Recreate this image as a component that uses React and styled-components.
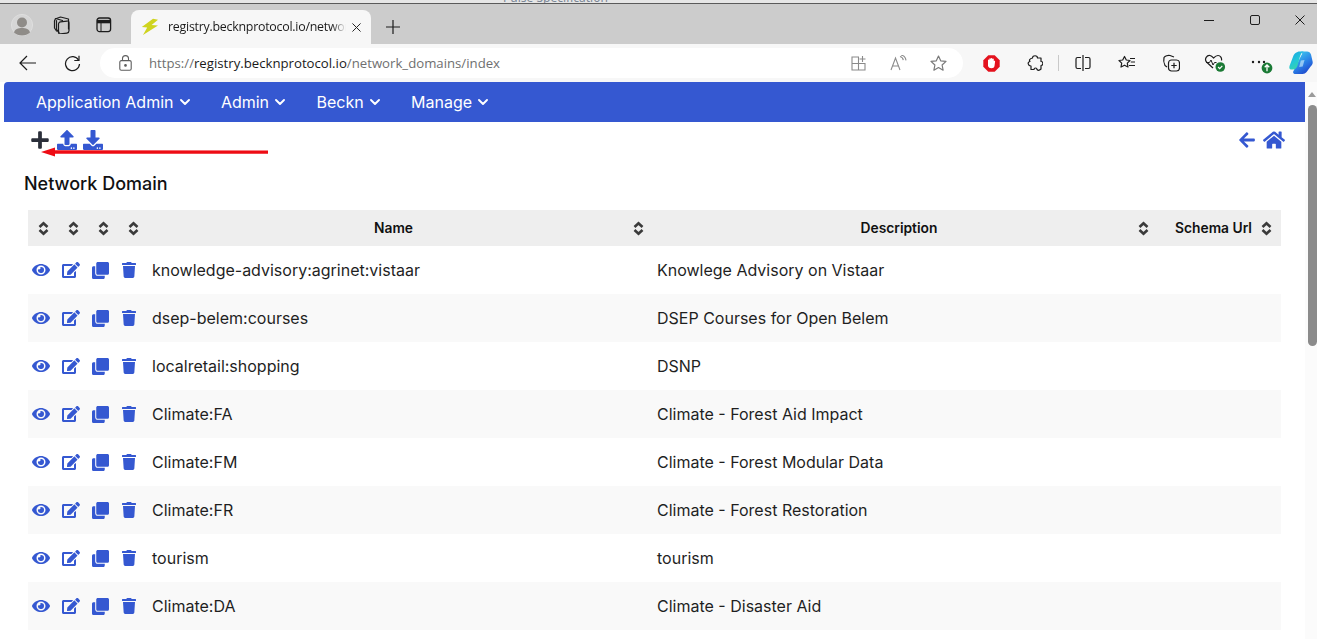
import React from "react";
import styled, { createGlobalStyle } from "styled-components";
import { FaPlus, FaUpload, FaDownload, FaEye, FaEdit, FaClone, FaTrash, FaArrowLeft, FaHome } from "react-icons/fa";

const Global = createGlobalStyle`
  html, body { margin: 0; padding: 0; height: 639px; overflow: hidden; background: #fff; }
  #root { height: 639px; }
  * { box-sizing: border-box; }
`;

const Shell = styled.div`
  width: 1317px; height: 639px; overflow: hidden; display: flex; flex-direction: column;
  font-family: Inter, "Liberation Sans", sans-serif;
`;
const TopStrip = styled.div`
  height: 4px; flex: none; background: #e6e6e6; border-bottom: 1px solid #5a5a5a;
  display: flex; overflow: hidden; padding-left: 503px; color: #7c8796;
  font: 12px/1 "Noto Sans", sans-serif;
`;
const Clipped = styled.span`
  display: block; margin-top: -8px; white-space: nowrap;
`;
const TabBar = styled.div`
  height: 40px; flex: none; background: #cccccc; display: flex; align-items: flex-end;
`;
const Slot = styled.div`
  width: ${p => p.$w || 44}px; height: ${p => p.$h || 40}px; flex: none;
  display: flex; align-items: center; justify-content: center; color: #1c1c1c;
`;
const Tab = styled.div`
  width: 240px; height: 34px; margin-left: 3px; flex: none; background: #f7f7f7; border-radius: 8px 8px 0 0;
  display: flex; align-items: center; padding-left: 10px; position: relative;
`;
const TabTitle = styled.div`
  margin-left: 9px; width: 178px; overflow: hidden; white-space: nowrap; color: #1b1b1b;
  font: 12.4px/18px "Open Sans", sans-serif; letter-spacing: -0.25px;
  -webkit-mask-image: linear-gradient(to right, #000 92%, transparent 100%);
  mask-image: linear-gradient(to right, #000 92%, transparent 100%);
`;
const TabClose = styled.div`
  margin-left: 6px; display: flex; align-items: center; color: #222;
`;
const Spacer = styled.div`flex: 1;`;
const WindowControls = styled.div`
  display: flex; gap: 11px; height: 40px; margin-top: -6px; align-self: flex-start;
`;
const ToolBar = styled.div`
  height: 38px; flex: none; background: #f7f7f7; display: flex; align-items: center; padding-left: 6px;
`;
const AddressBar = styled.div`
  width: 863px; height: 30px; margin-left: 6px; flex: none; background: #fff; border-radius: 15px;
  display: flex; align-items: center; padding: 0 5px 0 19px;
`;
const Url = styled.div`
  margin-left: 17px; flex: 1; white-space: nowrap; color: #6f6f6f;
  font: 13.2px/18px "Open Sans", sans-serif;
`;
const Host = styled.span`color: #1a1a1a;`;
const Sep = styled.div`width: 1px; height: 16px; background: #c9c9c9; margin: 0 2px 0 1px; flex: none;`;

const PageArea = styled.div`
  flex: 1; display: flex; min-height: 0; position: relative; background: #fff; padding-left: 4px;
`;
const Page = styled.div`
  width: 1301px; flex: none; display: flex; flex-direction: column;
`;
const NavBar = styled.nav`
  height: 40px; flex: none; background: #3558d1; border-radius: 4px 0 0 0; display: flex; align-items: center;
  padding-left: 32px; gap: 31.4px;
`;
const NavItem = styled.div`
  display: flex; align-items: center; gap: 6px; color: #fff; font-size: 16px; line-height: 24px; white-space: nowrap;
`;
const ActionBar = styled.div`
  height: 36px; flex: none; display: flex; align-items: center; justify-content: space-between;
  padding: 0 20px 0 26px;
`;
const IconGroup = styled.div`display: flex; align-items: center; gap: ${p => p.$gap}px; color: #3558d1;`;
const PlusIcon = styled(FaPlus)`color: #2b2f3a;`;
const Title = styled.h1`
  margin: 0; padding: 0 0 0 20px; height: 52px; flex: none; display: flex; align-items: center;
  font-size: 18px; font-weight: 500; color: #111; line-height: 24px;
`;
const TableWrap = styled.div`padding: 0 24px 0 24px;`;
const Table = styled.table`
  width: 1253px; border-collapse: collapse; table-layout: fixed; color: #212529;
`;
const HeadCell = styled.th`
  height: 36px; padding: 0; background: #eeeeee; position: relative; color: #111;
  font-size: 13.8px; font-weight: 600; text-align: center; white-space: nowrap;
`;
const HeadInner = styled.div`
  display: flex; align-items: center; justify-content: ${p => p.$only ? "center" : "space-between"};
  padding: ${p => p.$only ? "0" : "0 9px 0 4px"};
`;
const HeadLabel = styled.span`flex: 1; text-align: center; padding-left: ${p => p.$pl || 0}px;`;
const Row = styled.tr`
  height: 48px; background: ${p => p.$odd ? "#f9f9f9" : "#fff"};
`;
const ActionCell = styled.td`
  padding: 0; text-align: center; color: #3558d1; vertical-align: middle;
  & > svg { display: block; margin: 0 auto; position: relative; left: ${p => p.$dx || 0}px; }
`;
const TextCell = styled.td`
  padding: 0 4px; font-size: 16px; line-height: 24px; color: #1f1f1f; white-space: nowrap; vertical-align: middle;
`;
const ScrollTrack = styled.div`
  width: 12px; flex: none; background: #fbfbfb; position: relative; display: flex; flex-direction: column; align-items: center;
`;
const ScrollUp = styled.div`
  margin: 10px 0 0 2px; width: 0; height: 0; border-left: 4px solid transparent; border-right: 4px solid transparent;
  border-bottom: 5px solid #9a9a9a;
`;
const ScrollThumb = styled.div`
  margin: 8px 0 0 3px; width: 9px; height: 241px; flex: none; background: #8b8b8b; border-radius: 5px;
`;
const Arrow = styled.svg`
  position: absolute; left: 40px; top: 62px; pointer-events: none;
`;

const Chev = ({ size = 10 }) => (
  <svg width={size} height={size} viewBox="0 0 10 10" fill="none" stroke="#fff" strokeWidth="1.9" strokeLinecap="round" strokeLinejoin="round"><path d="M1 3l4 4 4-4" /></svg>
);
const NavEntry = ({ children }) => <NavItem>{children}<Chev /></NavItem>;

const Sort = () => (
  <svg width="11" height="15" viewBox="0 0 11 15" fill="none" stroke="#3a3a3a" strokeWidth="2.6" strokeLinejoin="miter" style={{ display: "block", flex: "none" }}>
    <path d="M1.5 6l4-3.800 4 3.800" /><path d="M1.5 9l4 3.800 4-3.800" />
  </svg>
);

const S = { fill: "none", stroke: "currentColor", strokeWidth: 1.2, strokeLinecap: "round", strokeLinejoin: "round" };
const Avatar = () => (
  <svg width="22" height="22" viewBox="0 0 22 22"><circle cx="11" cy="11" r="10.6" fill="#d6d6d6" stroke="#dedede" /><circle cx="11" cy="8.5" r="5" fill="#8f8c88" /><path d="M3 18.5c1-3.5 4-4.5 8-4.5s7 1 8 4.5c-2 2-5 3-8 3s-6-1-8-3z" fill="#8f8c88" /></svg>
);
const Collections = () => (
  <svg width="18" height="18" viewBox="0 0 18 18" {...S}><path d="M3.5 2.5l4-1.5 8 2v10" /><path d="M1.5 5l1-2.5 7 2" /><path d="M1.5 5v7l2 3" /><rect x="5.5" y="5" width="10.5" height="12" rx="2" transform="skewY(-8) translate(0 2)" /><path d="M3.5 4.5v9l2.5 3" /></svg>
);
const VerticalTabs = () => (
  <svg width="16" height="16" viewBox="0 0 16 16" fill="none" stroke="#1c1c1c" strokeWidth="1.3"><rect x="1" y="1" width="13.6" height="13.6" rx="2.5" /><path d="M1 4.6h13.6" strokeWidth="3.4" /><path d="M5 5v9" strokeWidth="1" /></svg>
);
const Bolt = () => (
  <svg width="18" height="18" viewBox="0 0 18 18"><path d="M12 .8L.8 9l5.4.4L2 17l15-9.6-6.4-.5L17 1.8z" fill="#cfd41f" /></svg>
);
const Close = ({ size = 10, w = 1.1 }) => (
  <svg width={size} height={size} viewBox="0 0 10 10" stroke="currentColor" strokeWidth={w} fill="none"><path d="M.5.5l9 9M9.5.5l-9 9" /></svg>
);
const NewTab = () => (
  <svg width="14" height="14" viewBox="0 0 14 14" stroke="#1c1c1c" strokeWidth="1.2" fill="none"><path d="M7 0v14M0 7h14" /></svg>
);
const Min = () => <svg width="10" height="10" viewBox="0 0 10 10" stroke="#1c1c1c" fill="none"><path d="M0 5.5h10" /></svg>;
const Max = () => <svg width="10" height="10" viewBox="0 0 10 10" stroke="#1c1c1c" fill="none"><rect x=".5" y=".5" width="9" height="9" rx="1.5" /></svg>;
const Back = () => (
  <svg width="18" height="16" viewBox="0 0 18 16" stroke="#1c1c1c" strokeWidth="1.2" fill="none"><path d="M17 8H1M8 1L1 8l7 7" /></svg>
);
const Reload = () => (
  <svg width="17" height="17" viewBox="0 0 17 17" stroke="#1c1c1c" strokeWidth="1.2" fill="none"><path d="M14.6 5.2A7 7 0 1 0 15.5 9" /><path d="M15 .8v4.7h-4.7" /></svg>
);
const Lock = () => (
  <svg width="13" height="16" viewBox="0 0 13 16" stroke="#5e5e5e" strokeWidth="1.1" fill="none"><rect x=".8" y="5.6" width="11.4" height="9.6" rx="1.5" /><path d="M3.5 5.5V3.6a3 3 0 0 1 6 0v1.9" /><circle cx="6.5" cy="10.4" r=".8" fill="#5e5e5e" /></svg>
);
const AppsAdd = () => (
  <svg width="15" height="15" viewBox="0 0 15 15" stroke="#8a8a8a" strokeWidth="1.1" fill="none"><path d="M8 1H1v13h13V7.5H1M7.5 1v13" /><path d="M11.5 0v6M8.5 3h6" /></svg>
);
const ReadAloud = () => (
  <svg width="17" height="16" viewBox="0 0 17 16" stroke="#8a8a8a" strokeWidth="1.1" fill="none"><path d="M1 15L5.5 3 10 15M2.6 11h6" /><path d="M10 1.5c2 .5 3 1.8 3.3 3.6M11 0c3 .6 4.600 2.600 5 5.300" /></svg>
);
const Star = ({ c = "#7a7a7a" }) => (
  <svg width="17" height="16" viewBox="0 0 17 16" stroke={c} strokeWidth="1.2" fill="none" strokeLinejoin="round"><path d="M8.500 1l2.200 4.800 5.300.6-3.900 3.600 1 5.200-4.600-2.600-4.600 2.600 1-5.200L1 6.400l5.300-.6z" /></svg>
);
const AdBlock = () => (
  <svg width="17" height="17" viewBox="0 0 17 17"><path d="M5.300.3h6.400l5 5v6.400l-5 5H5.300l-5-5V5.300z" fill="#e4121e" /><path d="M5 9V5.200c0-1 1.300-1 1.300 0V4c0-1 1.500-1 1.500 0v-.3c0-1 1.500-1 1.500 0V4.300c0-1 1.500-1 1.500 0V6.200c.300-.8 1.500-.6 1.300.4L11.500 11c-.3 1.300-1.300 2.300-3 2.300-2 0-2.800-1-3.500-2.300z" fill="#fff" /></svg>
);
const Puzzle = () => (
  <svg width="16" height="16" viewBox="0 0 16 16" stroke="#1c1c1c" strokeWidth="1.2" fill="none" strokeLinejoin="round"><path d="M5.500 3c0-3 5-3 5 0h3.500v3.500c2.500 0 2.500 4 0 4V14c-1.500 1.500-3 1.500-4 .5 0-2-3-2-3 0H4v-3.500C1 11 0 7 3 6.500 2 5.500 2.500 3.500 5.500 3z" /></svg>
);
const Split = () => (
  <svg width="16" height="16" viewBox="0 0 16 16" stroke="#1c1c1c" strokeWidth="1.2" fill="none"><path d="M6 2.500H2.500a1.500 1.500 0 0 0-1.500 1.500v8a1.500 1.500 0 0 0 1.500 1.500H6M10 2.500h3.500A1.500 1.500 0 0 1 15 4v8a1.500 1.500 0 0 1-1.500 1.500H10M8 0v16" /></svg>
);
const Favs = () => (
  <svg width="18" height="16" viewBox="0 0 18 16" stroke="#1c1c1c" strokeWidth="1.2" fill="none" strokeLinejoin="round"><path d="M6.500 1.500L8.300 5l3.700.5-2.700 2.700.7 3.800-3.500-1.800L3 12l.7-3.800L1 5.500 4.700 5z" /><path d="M12 3.500h5M12.800 7h4.200M11 10.500h6" /></svg>
);
const CollectionAdd = () => (
  <svg width="18" height="18" viewBox="0 0 18 18" stroke="#1c1c1c" strokeWidth="1.2" fill="none" strokeLinejoin="round"><path d="M2 3.500C3 2 6 1 8 1.500l4 1.500M2 3.500c-.5 2-.5 5 1 8l2 1.500" /><rect x="6.500" y="6" width="11" height="11" rx="3" /><path d="M12 8.800v5.400M9.300 11.500h5.400" /></svg>
);
const Health = () => (
  <svg width="22" height="20" viewBox="0 0 22 20"><path d="M9 15L2.500 9C0 6 3 2 6 2.500 8 3 9 4.500 9.500 5 10 4.500 12 2.500 14 2.500c2.500 0 4 2.500 3.500 5" stroke="#1c1c1c" strokeWidth="1.2" fill="none" /><path d="M2 9.500h3.500l1.500-2.500 2 5 1.500-2.500h2" stroke="#1c1c1c" strokeWidth="1" fill="none" /><circle cx="16.300" cy="14" r="4.800" fill="#1c7a35" /><path d="M14.100 14l1.600 1.600 2.600-2.800" stroke="#fff" strokeWidth="1.200" fill="none" /></svg>
);
const More = () => (
  <svg width="28" height="24" viewBox="0 0 28 24"><circle cx="8" cy="11" r="1.200" fill="#1c1c1c" /><circle cx="14" cy="11" r="1.200" fill="#1c1c1c" /><circle cx="19" cy="11" r="1.200" fill="#1c1c1c" /><circle cx="22" cy="17" r="5.400" fill="#1a7a35" /><path d="M22 20.200v-6M19.700 16.300L22 14l2.300 2.300" stroke="#fff" strokeWidth="1.300" fill="none" /></svg>
);
const Copilot = () => (
  <svg width="24" height="24" viewBox="0 0 24 24">
    <defs>
      <linearGradient id="cpa" x1="0" y1="0" x2="0.6" y2="1"><stop offset="0" stopColor="#1b9fe6" /><stop offset="0.55" stopColor="#22c6d8" /><stop offset="1" stopColor="#3bd8a0" /></linearGradient>
      <linearGradient id="cpb" x1="0.2" y1="0" x2="0.8" y2="1"><stop offset="0" stopColor="#3fd0f0" /><stop offset="0.55" stopColor="#2a7fe6" /><stop offset="1" stopColor="#1e3fc8" /></linearGradient>
    </defs>
    <path d="M12 .5h6c2 0 3.300 1 4 3l1.600 7c.5 2.500-.8 4-2 5l-4 5.500c-1 1.300-2.500 2-4 2H6.500c-2 0-3-1.500-2-3l8-16C13.500 3 13.500 1.500 12 .5z" fill="url(#cpb)" />
    <path d="M8 1.200C9 .6 10 .5 11 .5h4c-2 .5-3 2-4 5L8.500 14.500c-.8 2.500-2.500 4-4.500 4H2c-1.500 0-2-1.500-1.500-3.500L4.500 4.500C5.200 2.800 6.500 1.800 8 1.200z" fill="url(#cpa)" />
    <path d="M11.800 9.500l3.700-.5-1.800 6.500-3.500.5z" fill="#d8f4fb" opacity="0.6" />
  </svg>
);

const rows = [
  ["knowledge-advisory:agrinet:vistaar", "Knowlege Advisory on Vistaar"],
  ["dsep-belem:courses", "DSEP Courses for Open Belem"],
  ["localretail:shopping", "DSNP"],
  ["Climate:FA", "Climate - Forest Aid Impact"],
  ["Climate:FM", "Climate - Forest Modular Data"],
  ["Climate:FR", "Climate - Forest Restoration"],
  ["tourism", "tourism"],
  ["Climate:DA", "Climate - Disaster Aid"],
  ["", ""],
];

export default function App() {
  return (
    <Shell>
      <Global />
      <TopStrip><Clipped>Pulse Specification</Clipped></TopStrip>
      <TabBar>
        <Slot $w={44} $h={38}><Avatar /></Slot>
        <Slot $w={36} $h={38}><Collections /></Slot>
        <Slot $w={48} $h={38}><VerticalTabs /></Slot>
        <Tab>
          <Bolt />
          <TabTitle>registry.becknprotocol.io/network_domains/index</TabTitle>
          <TabClose><Close size={9} /></TabClose>
        </Tab>
        <Slot $w={44} $h={34}><NewTab /></Slot>
        <Spacer />
        <WindowControls>
          <Slot $w={36} $h={44}><Min /></Slot>
          <Slot $w={34} $h={44}><Max /></Slot>
          <Slot $w={34} $h={44}><Close size={10} w={1} /></Slot>
        </WindowControls>
      </TabBar>
      <ToolBar>
        <Slot $h={38}><Back /></Slot>
        <Slot $h={38}><Reload /></Slot>
        <AddressBar>
          <Lock />
          <Url>https://<Host>registry.becknprotocol.io</Host>/network_domains/index</Url>
          <Slot $w={40} $h={30}><AppsAdd /></Slot>
          <Slot $w={40} $h={30}><ReadAloud /></Slot>
          <Slot $w={40} $h={30}><Star /></Slot>
        </AddressBar>
        <Slot $w={6} $h={38} />
        <Slot $h={38}><AdBlock /></Slot>
        <Slot $h={38}><Puzzle /></Slot>
        <Sep />
        <Slot $h={38}><Split /></Slot>
        <Slot $h={38}><Favs /></Slot>
        <Slot $h={38}><CollectionAdd /></Slot>
        <Slot $h={38}><Health /></Slot>
        <Slot $h={38}><More /></Slot>
        <Slot $w={40} $h={38}><Copilot /></Slot>
      </ToolBar>
      <PageArea>
        <Page>
          <NavBar>
            <NavEntry>Application Admin</NavEntry>
            <NavEntry>Admin</NavEntry>
            <NavEntry>Beckn</NavEntry>
            <NavEntry>Manage</NavEntry>
          </NavBar>
          <ActionBar>
            <IconGroup $gap={6.5}>
              <PlusIcon size={20} />
              <FaUpload size={20} />
              <FaDownload size={20} />
            </IconGroup>
            <IconGroup $gap={7}>
              <FaArrowLeft size={18} />
              <FaHome size={22} />
            </IconGroup>
          </ActionBar>
          <Title>Network Domain</Title>
          <TableWrap>
            <Table>
              <colgroup>
                <col width="30" /><col width="30" /><col width="30" /><col width="30" />
                <col width="505" /><col width="505" /><col width="123" />
              </colgroup>
              <thead>
                <tr>
                  {[0, 1, 2, 3].map(i => (
                    <HeadCell key={i}><HeadInner $only><Sort /></HeadInner></HeadCell>
                  ))}
                  <HeadCell><HeadInner><HeadLabel $pl={2}>Name</HeadLabel><Sort /></HeadInner></HeadCell>
                  <HeadCell><HeadInner><HeadLabel $pl={3}>Description</HeadLabel><Sort /></HeadInner></HeadCell>
                  <HeadCell><HeadInner><HeadLabel $pl={4}>Schema Url</HeadLabel><Sort /></HeadInner></HeadCell>
                </tr>
              </thead>
              <tbody>
                {rows.map((r, i) => (
                  <Row key={i} $odd={i % 2 === 1}>
                    {r[0] ? (
                      <>
                        <ActionCell $dx={-2}><FaEye size={18} /></ActionCell>
                        <ActionCell $dx={-2}><FaEdit size={18} /></ActionCell>
                        <ActionCell $dx={-3}><FaClone size={17} /></ActionCell>
                        <ActionCell $dx={-4}><FaTrash size={16} /></ActionCell>
                      </>
                    ) : (
                      <><td /><td /><td /><td /></>
                    )}
                    <TextCell>{r[0]}</TextCell>
                    <TextCell>{r[1]}</TextCell>
                    <TextCell />
                  </Row>
                ))}
              </tbody>
            </Table>
          </TableWrap>
        </Page>
        <ScrollTrack>
          <ScrollUp />
          <ScrollThumb />
        </ScrollTrack>
        <Arrow width="232" height="16" viewBox="0 0 232 16">
          <path d="M1 8L15 3.500V6.300L228 6.600V9.800L15 9.800V12.500Z" fill="#ee0c14" />
        </Arrow>
      </PageArea>
    </Shell>
  );
}
